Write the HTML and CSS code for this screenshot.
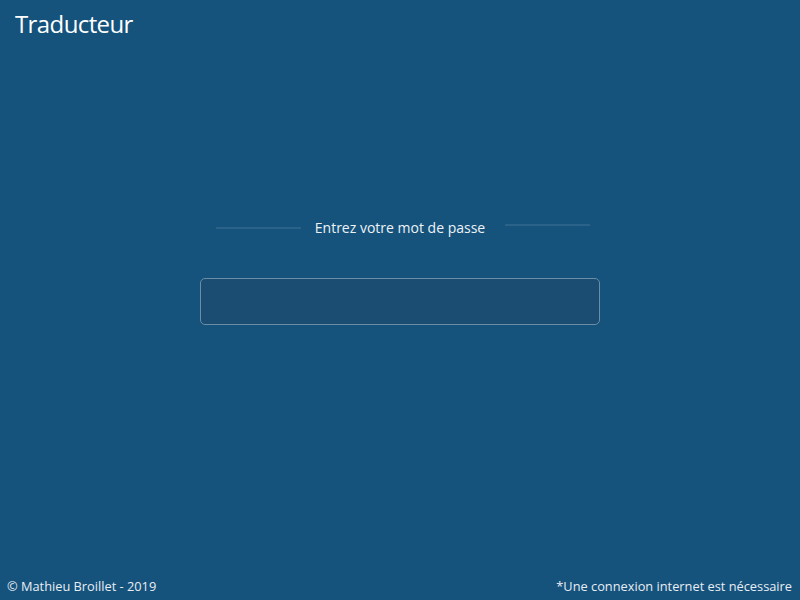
FILE: index.html
```html
<!DOCTYPE html>
<html lang="fr">
<head>
<meta charset="utf-8">
<title>Traducteur</title>
<link rel="stylesheet" href="styles.css">
</head>
<body>
<div class="page">
  <header class="header"><h1 class="title">Traducteur</h1></header>
  <main class="main">
    <div class="label-row">
      <span class="line line-left"></span>
      <span class="label">Entrez votre mot de passe</span>
      <span class="line line-right"></span>
    </div>
    <input class="password" type="password" aria-label="Mot de passe">
  </main>
  <footer class="footer">
    <span>© Mathieu Broillet - 2019</span>
    <span>*Une connexion internet est nécessaire</span>
  </footer>
</div>
</body>
</html>
```
FILE: styles.css
```css
html, body {
  margin: 0;
  padding: 0;
  height: 100%;
}
body {
  background: #15527c;
  color: #f2f5f8;
  font-family: "Open Sans", "Noto Sans", sans-serif;
}
.page {
  height: 600px;
  display: flex;
  flex-direction: column;
}
.header {
  padding: 7px 15px 0;
  height: 43px;
  box-sizing: border-box;
}
.title {
  margin: 0;
  font-weight: 400;
  font-size: 24px;
  line-height: 34px;
  color: #ffffff;
  letter-spacing: -0.6px;
}
.main {
  flex: 1;
  display: flex;
  flex-direction: column;
  align-items: center;
  padding-top: 175px;
}
.label-row {
  display: flex;
  align-items: flex-start;
  height: 20px;
  margin-left: 6px;
}
.line {
  width: 85px;
  height: 2px;
  background: #2b6289;
}
.line-left { margin-top: 9px; margin-right: 14px; }
.line-right { margin-top: 6px; margin-left: 20px; }
.label {
  font-size: 14px;
  line-height: 20px;
  color: #eef2f6;
  white-space: nowrap;
  letter-spacing: 0;
}
.password {
  margin-top: 40px;
  width: 400px;
  height: 47px;
  box-sizing: border-box;
  background: #1a4d71;
  border: 1px solid #6a8ea8;
  border-radius: 5px;
  outline: none;
  color: #fff;
  padding: 0 12px;
  font-size: 16px;
}
.footer {
  display: flex;
  justify-content: space-between;
  padding: 0 8px 6px 7px;
  font-size: 12.8px;
  line-height: 16px;
  color: #e8eef3;
}
```
